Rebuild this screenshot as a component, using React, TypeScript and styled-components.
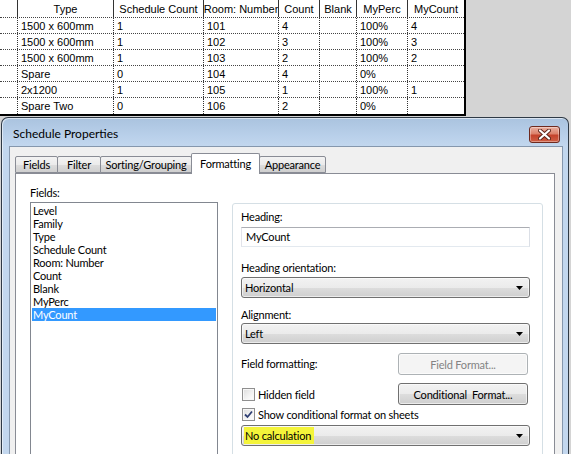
import React from "react";
import styled, { createGlobalStyle } from "styled-components";

const UI = `"Lato", "Noto Sans", sans-serif`;

const GlobalStyle = createGlobalStyle`
  html, body { margin: 0; padding: 0; }
  body { background: #d4d4d4; width: 571px; height: 454px; overflow: hidden; }
  #root { width: 571px; height: 454px; overflow: hidden; }
`;

const Page = styled.div`
  display: flex;
  flex-direction: column;
  width: 571px;
  height: 454px;
  overflow: hidden;
`;

/* ---------- schedule table ---------- */
const Sheet = styled.div`
  width: 464px;
  background: #fff;
  border-right: 2px solid #000;
  border-bottom: 2px solid #000;
  font: 11px "Liberation Sans", Arial, sans-serif;
  color: #000;
  flex: none;
`;

const SheetRow = styled.div<{ $head?: boolean; $last?: boolean }>`
  display: grid;
  grid-template-columns: 18px 96px 90px 75px 41px 37px 51px 56px;
  height: ${(p) => (p.$head ? 18 : 16)}px;
  box-sizing: border-box;
  border-bottom: ${(p) => (p.$last ? "none" : "1px dotted #444")};
`;

const Cell = styled.div<{ $head?: boolean; $end?: boolean }>`
  box-sizing: border-box;
  border-right: ${(p) => (p.$end ? "none" : `1px ${p.$head ? "solid" : "dotted"} #333`)};
  padding: 0 3px;
  display: flex;
  align-items: center;
  justify-content: ${(p) => (p.$head ? "center" : "flex-start")};
  white-space: nowrap;
  overflow: hidden;
`;

/* ---------- dialog ---------- */
const Dialog = styled.div`
  margin: 1px 0 0 1px;
  width: 568px;
  height: 345px;
  flex: none;
  box-sizing: border-box;
  border: 1px solid #2f3a46;
  border-bottom: none;
  border-radius: 7px 7px 0 0;
  background: linear-gradient(180deg, #aac3df 0px, #b9d0ea 18px, #c2d7ee 28px, #c3d7ee 100%);
  box-shadow: inset 1px 1px 0 rgba(255, 255, 255, 0.55);
  padding: 0 5px 0 7px;
  display: flex;
  flex-direction: column;
`;

const TitleBar = styled.div`
  height: 28px;
  flex: none;
  display: flex;
  align-items: center;
  justify-content: space-between;
  padding: 0 3px 0 4px;
`;

const Title = styled.span`
  font: 12px ${UI};
  color: #000;
  margin-top: 2px;
`;

const CloseButton = styled.div`
  width: 31px;
  height: 17px;
  margin-top: 5px;
  box-sizing: border-box;
  border: 1px solid #6e2a1f;
  border-radius: 3px;
  background: linear-gradient(180deg, #eab0a1 0%, #dc826b 45%, #c4432c 55%, #cf5f45 100%);
  box-shadow: inset 0 0 0 1px rgba(255, 255, 255, 0.35);
  display: flex;
  align-items: center;
  justify-content: center;
`;

const Client = styled.div`
  flex: 1;
  background: #f0f0f0;
  border: 1px solid #8597ad;
  border-bottom: none;
  padding: 6px 7px 0 5px;
  display: flex;
  flex-direction: column;
  font: 11px ${UI};
  letter-spacing: -0.2px;
  color: #000;
`;

const TabStrip = styled.div`
  display: flex;
  align-items: flex-end;
  height: 20px;
  flex: none;
`;

const Tab = styled.div<{ $w: number; $active?: boolean }>`
  width: ${(p) => p.$w}px;
  box-sizing: border-box;
  height: ${(p) => (p.$active ? 21 : 17)}px;
  margin-bottom: ${(p) => (p.$active ? -1 : 0)}px;
  margin-left: -1px;
  &:first-child { margin-left: 0; }
  position: relative;
  z-index: ${(p) => (p.$active ? 2 : 1)};
  border: 1px solid #898c95;
  border-bottom: ${(p) => (p.$active ? "none" : "1px solid #898c95")};
  background: ${(p) =>
    p.$active ? "#fff" : "linear-gradient(180deg, #f3f3f3 0%, #ebebeb 50%, #dddddd 51%, #cfcfcf 100%)"};
  border-radius: 2px 2px 0 0;
  display: flex;
  align-items: ${(p) => (p.$active ? "flex-start" : "center")};
  padding-top: ${(p) => (p.$active ? 3 : 0)}px;
  justify-content: center;
  white-space: nowrap;
`;

const TabPanel = styled.div`
  flex: 1;
  background: #fff;
  border: 1px solid #898c95;
  border-bottom: none;
  padding: 11px 0 0 14px;
  display: flex;
  align-items: flex-start;
  gap: 14px;
`;

const FieldsColumn = styled.div`
  width: 188px;
  display: flex;
  flex-direction: column;
`;

const Label = styled.div`
  line-height: 16px;
  height: 16px;
  white-space: nowrap;
`;

const ListBox = styled.div`
  margin-top: 1px;
  height: 300px;
  box-sizing: border-box;
  border: 1px solid #828790;
  padding: 1px 0;
`;

const ListItem = styled.div<{ $sel?: boolean }>`
  height: 13px;
  line-height: 13px;
  margin: 0 1px;
  padding-left: 1px;
  background: ${(p) => (p.$sel ? "#3399ff" : "transparent")};
  color: ${(p) => (p.$sel ? "#fff" : "#000")};
  white-space: nowrap;
`;

const GroupBox = styled.div`
  margin-top: 18px;
  width: 311px;
  height: 300px;
  box-sizing: border-box;
  border: 1px solid #d5dfe5;
  border-radius: 3px;
  padding: 5px 12px 0 8px;
  display: flex;
  flex-direction: column;
`;

const Spaced = styled.div<{ $top: number }>`
  margin-top: ${(p) => p.$top}px;
`;

const TextBox = styled.div`
  margin-top: 2px;
  height: 20px;
  box-sizing: border-box;
  border: 1px solid;
  border-color: #abadb3 #dbdfe6 #e3e9ef #e2e3ea;
  padding-left: 4px;
  line-height: 18px;
`;

const Combo = styled.div<{ $top: number }>`
  margin-top: ${(p) => p.$top}px;
  height: 21px;
  box-sizing: border-box;
  border: 1px solid #707070;
  border-radius: 3px;
  background: linear-gradient(180deg, #f2f2f2 0%, #ebebeb 50%, #dddddd 51%, #cfcfcf 100%);
  box-shadow: inset 0 0 0 1px rgba(255, 255, 255, 0.6);
  display: flex;
  align-items: center;
  justify-content: space-between;
  padding: 0 6px 0 3px;
`;

const Highlight = styled.span`
  background: #f4f43a;
  padding: 2px 3px 2px 1px;
  margin-left: -1px;
  line-height: 13px;
`;

const Row = styled.div<{ $top: number; $h: number }>`
  margin-top: ${(p) => p.$top}px;
  height: ${(p) => p.$h}px;
  display: flex;
  align-items: center;
  justify-content: space-between;
`;

const Button = styled.div<{ $disabled?: boolean }>`
  width: 130px;
  height: 22px;
  margin-right: 2px;
  box-sizing: border-box;
  border: 1px solid ${(p) => (p.$disabled ? "#adb2b5" : "#707070")};
  border-radius: 3px;
  background: ${(p) =>
    p.$disabled ? "#f4f4f4" : "linear-gradient(180deg, #f2f2f2 0%, #ebebeb 50%, #dddddd 51%, #cfcfcf 100%)"};
  box-shadow: inset 0 0 0 1px rgba(255, 255, 255, 0.6);
  color: ${(p) => (p.$disabled ? "#838383" : "#000")};
  display: flex;
  align-items: center;
  justify-content: center;
  white-space: nowrap;
`;

const CheckWrap = styled.label`
  display: flex;
  align-items: center;
  gap: 3px;
  white-space: nowrap;
`;

const CheckBox = styled.span`
  width: 13px;
  height: 13px;
  margin-left: 1px;
  box-sizing: border-box;
  border: 1px solid #8f8f8f;
  background: linear-gradient(135deg, #dcdcdc 0%, #f4f4f4 60%, #ffffff 100%);
  box-shadow: inset 0 0 0 1px #f7f7f7;
  display: flex;
  align-items: center;
  justify-content: center;
`;

const Arrow = () => (
  <svg width="7" height="4" viewBox="0 0 7 4">
    <polygon points="0,0 7,0 3.5,4" fill="#000" />
  </svg>
);

const Check = ({ checked }: { checked?: boolean }) => (
  <CheckBox>
    {checked && (
      <svg width="9" height="9" viewBox="0 0 9 9">
        <path d="M1 4.5 L3.5 7 L8 1.5" fill="none" stroke="#2f3f73" strokeWidth="1.8" />
      </svg>
    )}
  </CheckBox>
);

const columns = ["", "Type", "Schedule Count", "Room: Number", "Count", "Blank", "MyPerc", "MyCount"];
const rows = [
  ["", "1500 x 600mm", "1", "101", "4", "", "100%", "4"],
  ["", "1500 x 600mm", "1", "102", "3", "", "100%", "3"],
  ["", "1500 x 600mm", "1", "103", "2", "", "100%", "2"],
  ["", "Spare", "0", "104", "4", "", "0%", ""],
  ["", "2x1200", "1", "105", "1", "", "100%", "1"],
  ["", "Spare Two", "0", "106", "2", "", "0%", ""],
];

const tabs = [
  { name: "Fields", w: 43 },
  { name: "Filter", w: 44 },
  { name: "Sorting/Grouping", w: 92 },
  { name: "Formatting", w: 69, active: true },
  { name: "Appearance", w: 67 },
];

const fields = ["Level", "Family", "Type", "Schedule Count", "Room: Number", "Count", "Blank", "MyPerc", "MyCount"];

export default function App() {
  return (
    <Page>
      <GlobalStyle />
      <Sheet>
        <SheetRow $head>
          {columns.map((c, i) => (
            <Cell key={i} $head $end={i === columns.length - 1}>
              {c}
            </Cell>
          ))}
        </SheetRow>
        {rows.map((r, ri) => (
          <SheetRow key={ri} $last={ri === rows.length - 1}>
            {r.map((c, i) => (
              <Cell key={i} $end={i === r.length - 1}>
                {c}
              </Cell>
            ))}
          </SheetRow>
        ))}
      </Sheet>

      <Dialog>
        <TitleBar>
          <Title>Schedule Properties</Title>
          <CloseButton>
            <svg width="13" height="11" viewBox="0 0 13 11">
              <path d="M2 1.5 L11 9.5 M11 1.5 L2 9.5" stroke="#5a2318" strokeWidth="4" strokeLinecap="round" />
              <path d="M2 1.5 L11 9.5 M11 1.5 L2 9.5" stroke="#fff" strokeWidth="2.2" strokeLinecap="round" />
            </svg>
          </CloseButton>
        </TitleBar>
        <Client>
          <TabStrip>
            {tabs.map((t) => (
              <Tab key={t.name} $w={t.w} $active={t.active}>
                {t.name}
              </Tab>
            ))}
          </TabStrip>
          <TabPanel>
            <FieldsColumn>
              <Label>Fields:</Label>
              <ListBox>
                {fields.map((f) => (
                  <ListItem key={f} $sel={f === "MyCount"}>
                    {f}
                  </ListItem>
                ))}
              </ListBox>
            </FieldsColumn>
            <GroupBox>
              <Label>Heading:</Label>
              <TextBox>MyCount</TextBox>
              <Spaced $top={13}>
                <Label>Heading orientation:</Label>
              </Spaced>
              <Combo $top={1}>
                <span>Horizontal</span>
                <Arrow />
              </Combo>
              <Spaced $top={9}>
                <Label>Alignment:</Label>
              </Spaced>
              <Combo $top={0}>
                <span>Left</span>
                <Arrow />
              </Combo>
              <Row $top={9} $h={22}>
                <Label>Field formatting:</Label>
                <Button $disabled>Field Format...</Button>
              </Row>
              <Row $top={8} $h={22}>
                <CheckWrap>
                  <Check />
                  Hidden field
                </CheckWrap>
                <Button>Conditional&nbsp; Format...</Button>
              </Row>
              <Row $top={1} $h={16}>
                <CheckWrap>
                  <Check checked />
                  Show conditional format on sheets
                </CheckWrap>
              </Row>
              <Combo $top={3}>
                <Highlight>No calculation</Highlight>
                <Arrow />
              </Combo>
            </GroupBox>
          </TabPanel>
        </Client>
      </Dialog>
    </Page>
  );
}
